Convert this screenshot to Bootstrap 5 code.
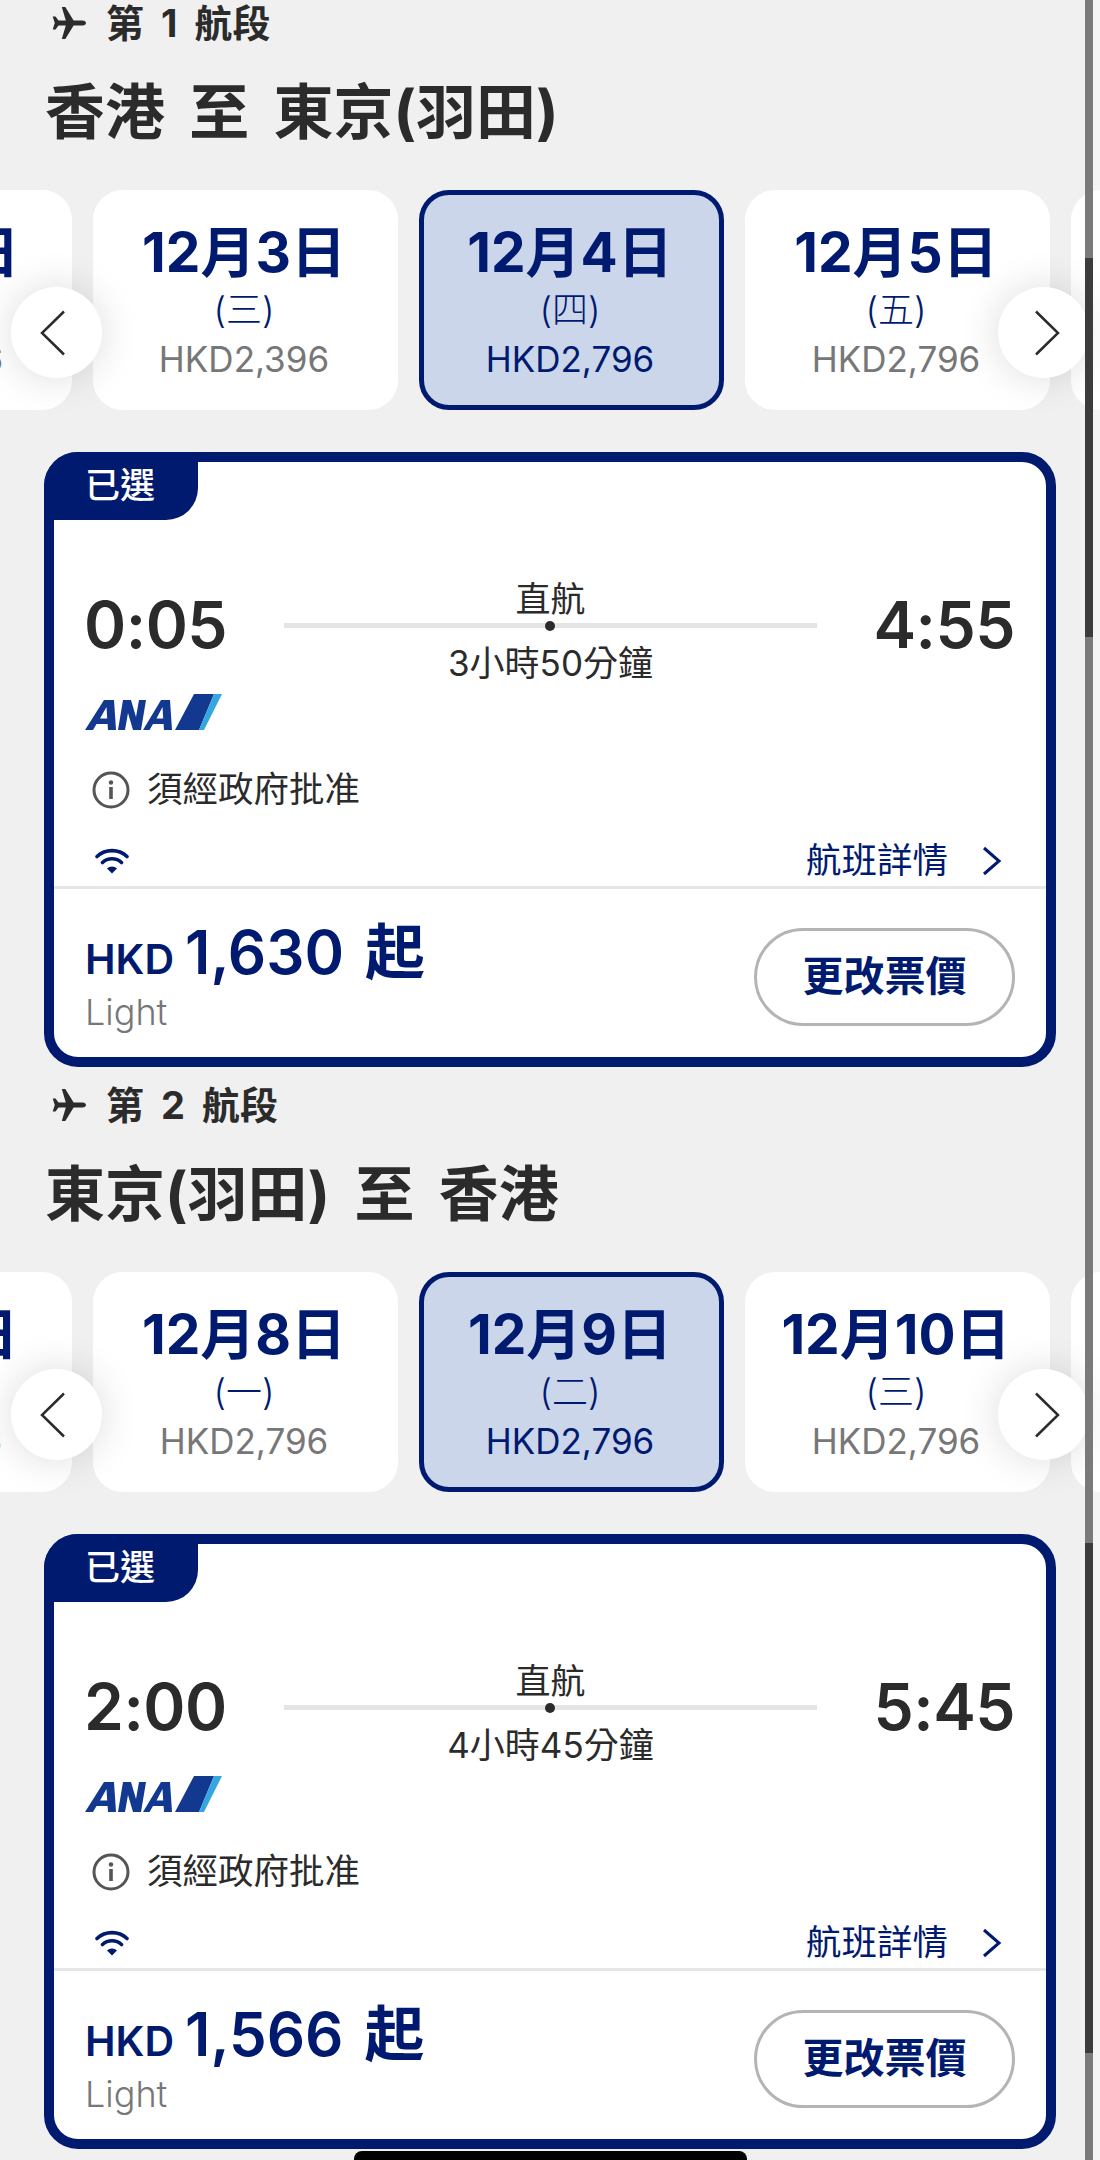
<!DOCTYPE html>
<html lang="zh-Hant">
<head>
  <meta charset="UTF-8" />
  <meta name="viewport" content="width=device-width, initial-scale=1.0"/>
  <title>航段選擇</title>
  <link href="https://cdn.jsdelivr.net/npm/bootstrap@5.3.2/dist/css/bootstrap.min.css" rel="stylesheet" />
  <style>
    :root { --ana-navy: #001a70; }

    html, body { height: 100%; }

    body {
      background: #f0f0f0;
      font-family: Inter, "Noto Sans CJK TC", sans-serif;
      color: #2b2b2b;
      overflow: hidden;
    }

    .page-wrap {
      width: 1100px;
      height: 2160px;
      position: relative;
      overflow: hidden;
    }

    .leg-block {
      height: 1082px;
      padding-top: 2px;
    }

    .leg-label {
      height: 42px;
      padding-left: 52px;
      font-size: 38px;
      font-weight: 700;
      line-height: 42px;
      word-spacing: 8px;
      gap: 20px;
    }

    .leg-title {
      margin: 33px 0 0 45px;
      height: 70px;
      font-size: 60px;
      font-weight: 700;
      line-height: 70px;
      word-spacing: 10px;
    }

    /* date strip */
    .date-strip {
      position: relative;
      margin-top: 43px;
      height: 220px;
    }

    .date-track {
      overflow: hidden;
      height: 220px;
      gap: 21px;
      width: 1100px;
    }

    .date-item {
      flex: 0 0 305px;
      height: 220px;
      background: #fff;
      border: 5px solid #fff;
      border-radius: 30px;
      text-align: center;
      padding: 25px 3px 0 0;
      color: var(--ana-navy);
    }

    .date-item:first-child { margin-left: -233px; }

    .date-item.is-picked {
      background: #cbd6ea;
      border-color: var(--ana-navy);
    }

    .date-day {
      font-size: 55px;
      font-weight: 700;
      line-height: 64px;
    }

    .date-week {
      font-size: 36px;
      font-weight: 300;
      line-height: 44px;
      margin-top: 4px;
    }

    .date-price {
      font-size: 35px;
      line-height: 50px;
      font-weight: 400;
      margin-top: 2px;
      color: #777;
    }

    .is-picked .date-price { color: var(--ana-navy); }

    .date-arrow {
      position: absolute;
      top: 97px;
      width: 91px;
      height: 91px;
      padding: 0;
      border: 0;
      border-radius: 50%;
      background: #fff;
      box-shadow: 0 0 40px rgba(0, 0, 0, .14);
    }

    .date-arrow.to-prev { left: 11px; padding-right: 7px; }
    .date-arrow.to-next { left: 998px; padding-left: 7px; }

    /* flight card */
    .flight-box {
      position: relative;
      margin: 42px 0 0 44px;
      width: 1012px;
      height: 615px;
      background: #fff;
      border: 10px solid var(--ana-navy);
      border-radius: 34px;
    }

    .picked-tab {
      position: absolute;
      left: -10px;
      top: -10px;
      width: 154px;
      height: 68px;
      padding-left: 41px;
      background: var(--ana-navy);
      color: #fff;
      font-size: 35px;
      font-weight: 500;
      line-height: 66px;
      border-radius: 34px 0 32px 0;
    }

    .time-row {
      padding: 123px 31px 0 30px;
      height: 230px;
    }

    .time-big {
      font-size: 64px;
      font-weight: 600;
      line-height: 80px;
      letter-spacing: -.5px;
    }

    .route-mid {
      position: absolute;
      left: 230px;
      top: 114px;
      width: 533px;
      text-align: center;
      font-size: 35px;
      line-height: 46px;
      font-weight: 400;
    }

    .route-line {
      position: relative;
      height: 5px;
      margin: 1px 0 12px;
      background: #e4e4e4;
    }

    .route-line::after {
      content: "";
      position: absolute;
      left: 261px;
      top: -2.5px;
      width: 10px;
      height: 10px;
      border-radius: 50%;
      background: #2b2b2b;
    }

    .ana-mark {
      display: block;
      margin-left: 31px;
    }

    .notice-row {
      margin: 35px 0 0 38px;
      height: 46px;
      gap: 17px;
      font-size: 35.5px;
      line-height: 46px;
    }

    .perk-row {
      height: 50px;
      margin-top: 23px;
      padding: 0 44px 0 41px;
      font-size: 35.5px;
      color: var(--ana-navy);
    }

    .detail-link { gap: 34px; line-height: 50px; color: var(--ana-navy); }

    .fare-row {
      border-top: 3px solid #e6e6e6;
      height: 171px;
      padding: 28px 31px 0 31px;
    }

    .fare-price {
      color: var(--ana-navy);
      font-weight: 600;
      line-height: 70px;
      gap: 11px;
    }

    .fare-cur { font-size: 41px; }
    .fare-num { font-size: 60px; }
    .fare-tail { font-size: 60px; font-weight: 700; margin-left: 10px; }

    .fare-name {
      font-size: 36px;
      line-height: 44px;
      margin-top: -4px;
      font-weight: 300;
      color: #777;
    }

    .btn.change-btn {
      width: 261px;
      height: 98px;
      padding: 0;
      margin-top: 11px;
      background: #fff;
      border: 3px solid #b4b4b4;
      border-radius: 49px;
      color: var(--ana-navy);
      font-size: 41px;
      font-weight: 700;
    }

    /* phone chrome */
    .scroll-rail {
      position: absolute;
      left: 1085px;
      top: 0;
      width: 8px;
      height: 2160px;
      background: #7a7a7a;
    }

    .scroll-thumb {
      position: absolute;
      left: 0;
      width: 8px;
      background: #3c3c3c;
    }

    .scroll-edge {
      position: absolute;
      left: 1093px;
      top: 0;
      width: 7px;
      height: 2160px;
      background: rgba(255, 255, 255, .3);
    }

    .home-bar {
      position: absolute;
      left: 354px;
      top: 2151px;
      width: 393px;
      height: 12px;
      background: #000;
      border-radius: 8px 8px 0 0;
    }
  </style>
</head>
<body>

<div class="page-wrap">

  <!-- Leg 1 -->
  <section class="leg-block">
    <div class="leg-label d-flex align-items-center">
      <svg width="34" height="34" viewBox="0 0 34 34"><path fill="#2b2b2b" d="M34 17c0-1.400-1.600-2.400-3.400-2.400h-9L13.300 1h-3.500l4 13.600H6.500L3.500 10.500H.7L2.800 17 .7 23.500h2.800l3-4.100h7.300l-4 13.600h3.500l8.300-13.600h9c1.800 0 3.400-1 3.400-2.400z"/></svg>
      <span>第 1 航段</span>
    </div>
    <h1 class="leg-title">香港 至 東京(羽田)</h1>

    <div class="date-strip">
      <div class="date-track d-flex">
        <div class="date-item"><div class="date-day">12月2日</div><div class="date-week">(二)</div><div class="date-price">HKD2,396</div></div>
        <div class="date-item"><div class="date-day">12月3日</div><div class="date-week">(三)</div><div class="date-price">HKD2,396</div></div>
        <div class="date-item is-picked"><div class="date-day">12月4日</div><div class="date-week">(四)</div><div class="date-price">HKD2,796</div></div>
        <div class="date-item"><div class="date-day">12月5日</div><div class="date-week">(五)</div><div class="date-price">HKD2,796</div></div>
        <div class="date-item"><div class="date-day">12月6日</div><div class="date-week">(六)</div><div class="date-price">HKD2,796</div></div>
      </div>
      <button class="date-arrow to-prev" type="button" aria-label="previous"><svg width="26" height="46" viewBox="0 0 26 46"><path d="M24 1.500 2 23l22 21.500" fill="none" stroke="#2b2b2b" stroke-width="2.500"/></svg></button>
      <button class="date-arrow to-next" type="button" aria-label="next"><svg width="26" height="46" viewBox="0 0 26 46"><path d="M2 1.500 24 23 2 44.500" fill="none" stroke="#2b2b2b" stroke-width="2.500"/></svg></button>
    </div>

    <div class="flight-box">
      <div class="picked-tab">已選</div>
      <div class="time-row d-flex justify-content-between align-items-start">
        <div class="time-big">0:05</div>
        <div class="time-big">4:55</div>
      </div>
      <div class="route-mid">
        <div>直航</div>
        <div class="route-line"></div>
        <div>3小時50分鐘</div>
      </div>
      <svg class="ana-mark" width="138" height="40" viewBox="0 0 138 40">
        <path fill="#12388f" fill-rule="evenodd" d="M0 38 19 8h10l2 30h-8l-.4-6H11.500L8 38zM15 26.500h7.200L21.500 15zM33 38 38 8h8l5 17 3-17h7l-5 30h-8l-5-17-3 17zM58 38 76 8h9l2 30h-8l-.4-6H68l-3.500 6zM71.500 26.500h6.700L77.500 15z"/>
        <path fill="#12388f" d="M90 38h24L129 2h-20z"/>
        <path fill="#34a6e0" d="M114 38h5L137 2h-8z"/>
      </svg>
      <div class="notice-row d-flex align-items-center">
        <svg width="38" height="38" viewBox="0 0 38 38"><circle cx="19" cy="19" r="17" fill="none" stroke="#555" stroke-width="3"/><circle cx="19" cy="11.500" r="2.200" fill="#555"/><rect x="17.200" y="16" width="3.600" height="12" fill="#555"/></svg>
        <span>須經政府批准</span>
      </div>
      <div class="perk-row d-flex justify-content-between align-items-center">
        <svg width="34" height="26" viewBox="0 0 34 26"><path d="M2 8.500a22 22 0 0 1 30 0M7.500 14.500a14 14 0 0 1 19 0" fill="none" stroke="#001a70" stroke-width="3.600" stroke-linecap="round"/><path d="M12 20.500a7 7 0 0 1 10 0L17 25.500z" fill="#001a70"/></svg>
        <div class="detail-link d-flex align-items-center">
          <span>航班詳情</span>
          <svg width="20" height="32" viewBox="0 0 20 32"><path d="M2 3l15 13L2 29" fill="none" stroke="#001a70" stroke-width="3"/></svg>
        </div>
      </div>
      <div class="fare-row d-flex justify-content-between align-items-start">
        <div>
          <div class="fare-price d-flex align-items-baseline"><span class="fare-cur">HKD</span><span class="fare-num">1,630</span><span class="fare-tail">起</span></div>
          <div class="fare-name">Light</div>
        </div>
        <button class="btn change-btn" type="button">更改票價</button>
      </div>
    </div>
  </section>

  <!-- Leg 2 -->
  <section class="leg-block">
    <div class="leg-label d-flex align-items-center">
      <svg width="34" height="34" viewBox="0 0 34 34"><path fill="#2b2b2b" d="M34 17c0-1.400-1.600-2.400-3.400-2.400h-9L13.300 1h-3.500l4 13.600H6.500L3.500 10.500H.7L2.800 17 .7 23.500h2.800l3-4.100h7.300l-4 13.600h3.500l8.300-13.600h9c1.800 0 3.400-1 3.400-2.400z"/></svg>
      <span>第 2 航段</span>
    </div>
    <h1 class="leg-title">東京(羽田) 至 香港</h1>

    <div class="date-strip">
      <div class="date-track d-flex">
        <div class="date-item"><div class="date-day">12月7日</div><div class="date-week">(日)</div><div class="date-price">HKD2,796</div></div>
        <div class="date-item"><div class="date-day">12月8日</div><div class="date-week">(一)</div><div class="date-price">HKD2,796</div></div>
        <div class="date-item is-picked"><div class="date-day">12月9日</div><div class="date-week">(二)</div><div class="date-price">HKD2,796</div></div>
        <div class="date-item"><div class="date-day">12月10日</div><div class="date-week">(三)</div><div class="date-price">HKD2,796</div></div>
        <div class="date-item"><div class="date-day">12月11日</div><div class="date-week">(四)</div><div class="date-price">HKD2,796</div></div>
      </div>
      <button class="date-arrow to-prev" type="button" aria-label="previous"><svg width="26" height="46" viewBox="0 0 26 46"><path d="M24 1.500 2 23l22 21.500" fill="none" stroke="#2b2b2b" stroke-width="2.500"/></svg></button>
      <button class="date-arrow to-next" type="button" aria-label="next"><svg width="26" height="46" viewBox="0 0 26 46"><path d="M2 1.500 24 23 2 44.500" fill="none" stroke="#2b2b2b" stroke-width="2.500"/></svg></button>
    </div>

    <div class="flight-box">
      <div class="picked-tab">已選</div>
      <div class="time-row d-flex justify-content-between align-items-start">
        <div class="time-big">2:00</div>
        <div class="time-big">5:45</div>
      </div>
      <div class="route-mid">
        <div>直航</div>
        <div class="route-line"></div>
        <div>4小時45分鐘</div>
      </div>
      <svg class="ana-mark" width="138" height="40" viewBox="0 0 138 40">
        <path fill="#12388f" fill-rule="evenodd" d="M0 38 19 8h10l2 30h-8l-.4-6H11.500L8 38zM15 26.500h7.200L21.500 15zM33 38 38 8h8l5 17 3-17h7l-5 30h-8l-5-17-3 17zM58 38 76 8h9l2 30h-8l-.4-6H68l-3.500 6zM71.500 26.500h6.700L77.500 15z"/>
        <path fill="#12388f" d="M90 38h24L129 2h-20z"/>
        <path fill="#34a6e0" d="M114 38h5L137 2h-8z"/>
      </svg>
      <div class="notice-row d-flex align-items-center">
        <svg width="38" height="38" viewBox="0 0 38 38"><circle cx="19" cy="19" r="17" fill="none" stroke="#555" stroke-width="3"/><circle cx="19" cy="11.500" r="2.200" fill="#555"/><rect x="17.200" y="16" width="3.600" height="12" fill="#555"/></svg>
        <span>須經政府批准</span>
      </div>
      <div class="perk-row d-flex justify-content-between align-items-center">
        <svg width="34" height="26" viewBox="0 0 34 26"><path d="M2 8.500a22 22 0 0 1 30 0M7.500 14.500a14 14 0 0 1 19 0" fill="none" stroke="#001a70" stroke-width="3.600" stroke-linecap="round"/><path d="M12 20.500a7 7 0 0 1 10 0L17 25.500z" fill="#001a70"/></svg>
        <div class="detail-link d-flex align-items-center">
          <span>航班詳情</span>
          <svg width="20" height="32" viewBox="0 0 20 32"><path d="M2 3l15 13L2 29" fill="none" stroke="#001a70" stroke-width="3"/></svg>
        </div>
      </div>
      <div class="fare-row d-flex justify-content-between align-items-start">
        <div>
          <div class="fare-price d-flex align-items-baseline"><span class="fare-cur">HKD</span><span class="fare-num">1,566</span><span class="fare-tail">起</span></div>
          <div class="fare-name">Light</div>
        </div>
        <button class="btn change-btn" type="button">更改票價</button>
      </div>
    </div>
  </section>

  <div class="scroll-rail">
    <div class="scroll-thumb" style="top: 258px; height: 379px"></div>
    <div class="scroll-thumb" style="top: 1543px; height: 510px"></div>
  </div>
  <div class="scroll-edge"></div>
  <div class="home-bar"></div>
</div>

</body>
</html>
